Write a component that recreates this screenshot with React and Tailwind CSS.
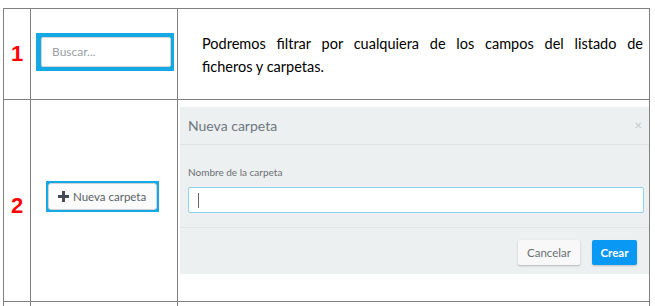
import React from 'react';

const Cell = ({ className = '', children }) => (
  <div className={`border-r border-b border-[#808080] ${className}`}>{children}</div>
);

const PlusIcon = () => (
  <svg width="11" height="11" viewBox="0 0 11 11" className="shrink-0">
    <path d="M4 0h3v4h4v3H7v4H4V7H0V4h4z" fill="#444b52" />
  </svg>
);

const NewFolderDialog = () => (
  <div className="ml-[2px] mt-[7px] h-[167px] bg-[#edf0f1] flex flex-col font-['Lato',sans-serif]">
    <div className="h-[38px] border-b border-[#dfe3e5] flex items-center justify-between pl-[8px] pr-[7px]">
      <span className="text-[14px] text-[#6d7780]">Nueva carpeta</span>
      <span className="text-[13px] text-[#c3c8cc] leading-none">×</span>
    </div>
    <div className="h-[83px] border-b border-[#e2e5e7] pl-[8px] pr-[5px] pt-[22px]">
      <div className="text-[10px] text-[#6a6f73] leading-none">Nombre de la carpeta</div>
      <div className="mt-[10px] h-[26px] bg-white border border-[#8fd3f2] rounded-[2px] flex items-center pl-[9px]">
        <div className="w-px h-[15px] bg-[#666]" />
      </div>
    </div>
    <div className="flex-1 flex justify-end items-start pt-[12px] pr-[12px] gap-[12px]">
      <button className="w-[62px] h-[25px] bg-[#f8f8f8] rounded-[2px] shadow-[0_1px_2px_rgba(0,0,0,0.25)] text-[11.5px] text-[#6a6f73]">
        Cancelar
      </button>
      <button className="w-[45px] h-[25px] bg-[#0a98f5] rounded-[2px] shadow-[0_1px_2px_rgba(0,0,0,0.2)] text-[11.5px] font-bold text-white">
        Crear
      </button>
    </div>
  </div>
);

export default function App() {
  return (
    <div className="w-[655px] h-[306px] bg-white overflow-hidden pt-[8px] pl-[3px]">
      <div className="grid grid-cols-[27px_147px_472px] grid-rows-[91px_202px_40px] border-l border-t border-[#808080] w-[647px]">
        {/* row 1 */}
        <Cell className="flex items-center justify-center">
          <span className="text-[22px] font-bold text-[#ff0000] font-['Liberation_Sans',sans-serif] leading-none">1</span>
        </Cell>
        <Cell className="pl-[5px] pt-[24px]">
          <div className="w-[138px] h-[38px] bg-[#14a9e2] pl-[5px] pr-[3px] py-[4px]">
            <div className="h-full bg-white border border-[#d3d6d8] rounded-[2px] flex items-center pl-[10px] font-['Lato',sans-serif] text-[12px] text-[#9aa0a4]">
              Buscar...
            </div>
          </div>
        </Cell>
        <Cell className="flex flex-col justify-center pt-[2px] pl-[24px] pr-[6px] text-[14.5px] leading-[23px] text-black font-['Lato',sans-serif]">
          <p className="text-justify [text-align-last:justify]">
            Podremos filtrar por cualquiera de los campos del listado de
          </p>
          <p>ficheros y carpetas.</p>
        </Cell>

        {/* row 2 */}
        <Cell className="flex items-center justify-center pt-[11px]">
          <span className="text-[22px] font-bold text-[#ff0000] font-['Liberation_Sans',sans-serif] leading-none">2</span>
        </Cell>
        <Cell className="pl-[15px] pt-[81px]">
          <div className="w-[113px] h-[31px] bg-[#14a9e2] p-[2px]">
            <div className="h-full bg-[#fbfbfb] border border-[#cfd3d6] rounded-[3px] flex items-center gap-[4px] pl-[9px] font-['Lato',sans-serif] text-[11.5px] text-[#5b6167]">
              <PlusIcon />
              <span>Nueva carpeta</span>
            </div>
          </div>
        </Cell>
        <Cell>
          <NewFolderDialog />
        </Cell>

        {/* row 3 */}
        <Cell />
        <Cell />
        <Cell />
      </div>
    </div>
  );
}
